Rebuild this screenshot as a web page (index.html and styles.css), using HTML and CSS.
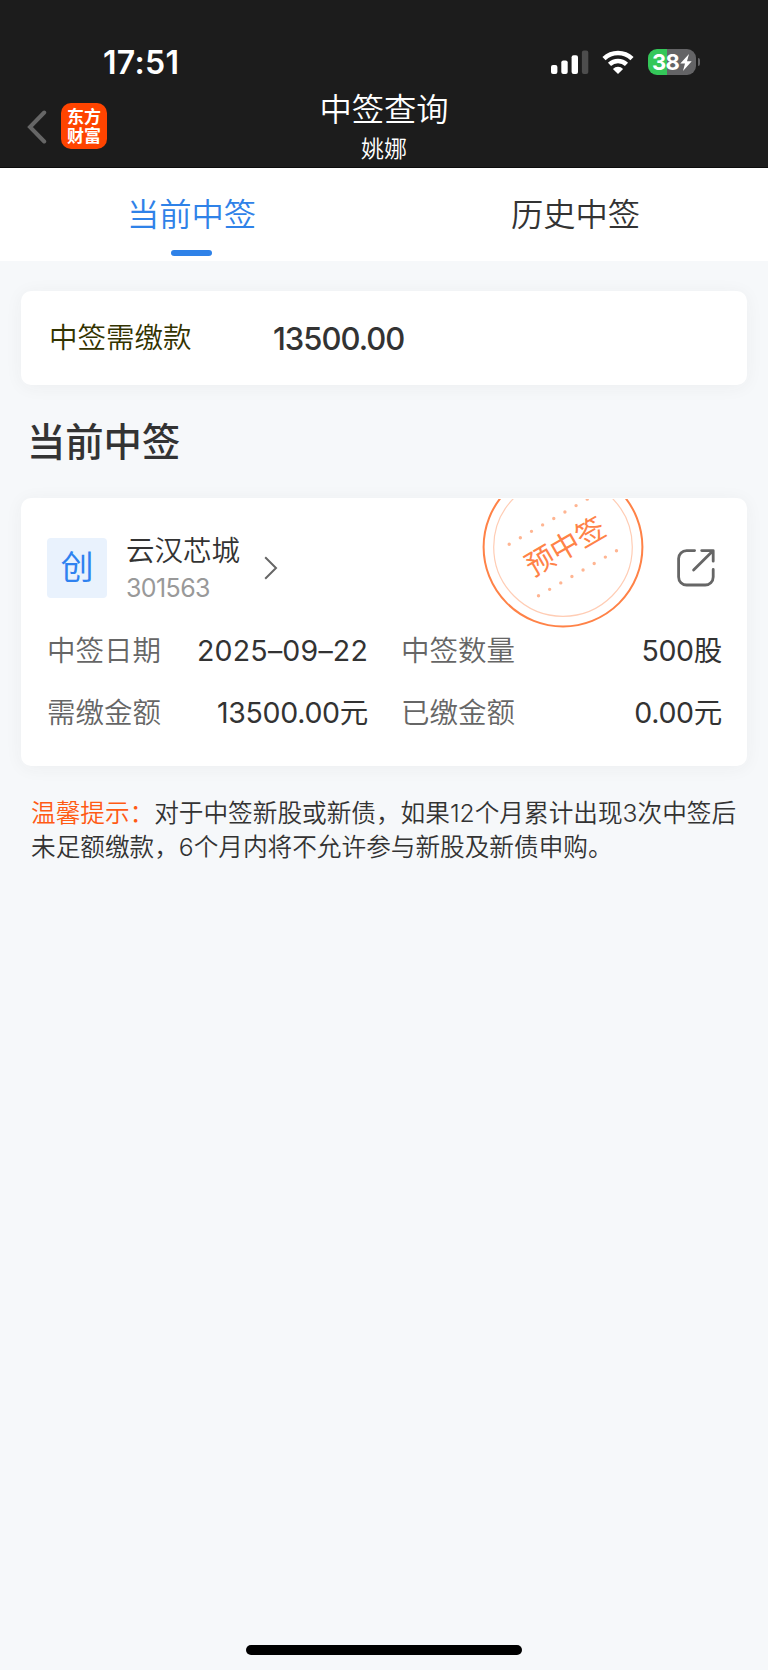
FILE: index.html
```html
<!DOCTYPE html>
<html lang="zh-CN">
<head>
    <meta charset="UTF-8">
    <meta name="viewport" content="width=device-width, initial-scale=1.0">
    <title>中签查询</title>
    <link rel="stylesheet" href="styles.css">
</head>
<body>
    <header class="header">
        <div class="status-bar">
            <span class="time">17:51</span>
            <div class="status-icons">
                <svg class="signal" width="38" height="24" viewBox="0 0 38 24" fill="#fff">
                    <rect x="0" y="15" width="6.4" height="9" rx="2"/>
                    <rect x="10.3" y="10.6" width="6.4" height="13.4" rx="2"/>
                    <rect x="20.6" y="5.2" width="6.4" height="18.8" rx="2"/>
                    <rect x="30.9" y="0.5" width="6.4" height="23.5" rx="2" fill="#4d4d4d"/>
                </svg>
                <svg class="wifi" width="32" height="24" viewBox="0 0 32 24">
                    <path d="M2 8.6A20.3 20.3 0 0 1 30 8.6" fill="none" stroke="#fff" stroke-width="4.6"/>
                    <path d="M7.5 14.4A12.2 12.2 0 0 1 24.5 14.4" fill="none" stroke="#fff" stroke-width="4.4"/>
                    <path d="M16 24L10.9 18.9A7.2 7.2 0 0 1 21.1 18.9Z" fill="#fff"/>
                </svg>
                <div class="battery">
                    <span>38</span>
                    <svg width="12" height="17" viewBox="0 0 12 17" fill="#fff">
                        <path d="M9 0L0.3 9.6H5L3 17L11.7 7.2H7Z"/>
                    </svg>
                </div>
                <i class="battery-cap"></i>
            </div>
        </div>
        <div class="nav">
            <div class="nav-left">
                <svg class="back" width="20" height="36" viewBox="0 0 20 36" fill="none" stroke="#666" stroke-width="4" stroke-linecap="round">
                    <path d="M17.2 3.5L3 18L17.2 32.5"/>
                </svg>
                <div class="app-logo">东方<br>财富</div>
            </div>
            <div class="nav-title">
                <h1>中签查询</h1>
                <p>姚娜</p>
            </div>
        </div>
    </header>

    <nav class="tabs">
        <a class="tab active">当前中签</a>
        <a class="tab">历史中签</a>
    </nav>

    <main class="content">
        <section class="card summary">
            <span class="summary-label">中签需缴款</span>
            <span class="summary-value">13500.00</span>
        </section>

        <h2>当前中签</h2>

        <section class="card detail">
            <svg class="stamp" width="164" height="131" viewBox="0 0 164 131">
                <circle cx="82" cy="48" r="79.4" fill="none" stroke="#ff8247" stroke-width="2"/>
                <circle cx="82" cy="48" r="69.3" fill="none" stroke="#ffcdb5" stroke-width="1.2"/>
                <g stroke="#ffb592" stroke-width="3.4" stroke-linecap="round" stroke-dasharray="0 12.87">
                    <path d="M28.2 45.2L107 -0.3"/>
                    <path d="M57.5 96.8L136.3 51.2"/>
                </g>
                <text class="stamp-text" x="84.5" y="58" text-anchor="middle" transform="rotate(-30 84 48)">预中签</text>
            </svg>

            <div class="stock">
                <div class="badge">创</div>
                <div class="stock-name">
                    <strong>云汉芯城</strong>
                    <span>301563</span>
                </div>
                <svg class="arrow" width="14" height="24" viewBox="0 0 14 24" fill="none" stroke="#666" stroke-width="2">
                    <path d="M1.2 1.2L12 12L1.2 22.8"/>
                </svg>
                <svg class="share" width="40" height="40" viewBox="0 0 40 40" fill="none" stroke="#666" stroke-width="2.8" stroke-linecap="round" stroke-linejoin="round">
                    <path d="M18.6 2.6H10.6A8 8 0 0 0 2.6 10.6V29A8 8 0 0 0 10.6 37H29.2A8 8 0 0 0 37.2 29V21.5"/>
                    <path d="M25.7 2.6H37.2V13.2M37 2.8L17.6 22"/>
                </svg>
            </div>

            <div class="info">
                <div class="item"><label>中签日期</label><span class="date">2025–09–22</span></div>
                <div class="item"><label>中签数量</label><span>500股</span></div>
                <div class="item"><label>需缴金额</label><span>13500.00元</span></div>
                <div class="item"><label>已缴金额</label><span>0.00元</span></div>
            </div>
        </section>

        <p class="tips"><em>温馨提示：</em>对于中签新股或新债，如果12个月累计出现3次中签后<br>未足额缴款，6个月内将不允许参与新股及新债申购。</p>
    </main>

    <div class="home-bar"></div>
</body>
</html>
```
FILE: styles.css
```css
* {
    margin: 0;
    padding: 0;
    box-sizing: border-box;
}

body {
    min-height: 100vh;
    display: flex;
    flex-direction: column;
    background: #f6f8fa;
    color: #333;
    font-family: Inter, "Noto Sans CJK SC", sans-serif;
    font-weight: 350;
}

/* header */
.header {
    height: 168px;
    background: #1c1c1c;
    border-bottom: 1px solid #0c0c0c;
    color: #fff;
}

.status-bar {
    height: 90px;
    padding: 35px 68px 0 103px;
    display: flex;
    justify-content: space-between;
    align-items: center;
}

.time {
    font-size: 32px;
    font-weight: 600;
    letter-spacing: 0.3px;
}

.status-icons {
    display: flex;
    align-items: center;
    margin-top: -1px;
}

.wifi {
    margin-left: 13px;
}

.battery {
    width: 48px;
    height: 26px;
    margin-left: 14px;
    padding-left: 4px;
    border-radius: 9px;
    background: linear-gradient(90deg, #34c759 19px, #646466 19px);
    display: flex;
    align-items: center;
    gap: 1px;
    font-size: 22px;
    font-weight: 700;
    letter-spacing: -0.6px;
}

.battery-cap {
    width: 2px;
    height: 8px;
    margin-left: 2px;
    border-radius: 0 4px 4px 0;
    background: #646466;
}

.nav {
    height: 77px;
    padding: 0 27px;
    display: grid;
    grid-template-columns: 1fr auto 1fr;
}

.nav-left {
    display: flex;
    align-items: flex-start;
    gap: 14px;
    padding-top: 13px;
}

.back {
    margin-top: 6px;
}

.app-logo {
    width: 46px;
    height: 46px;
    padding-top: 5px;
    border-radius: 10px;
    background: #ff4400;
    font-size: 17px;
    font-weight: 700;
    line-height: 19px;
    text-align: center;
}

.nav-title {
    text-align: center;
}

.nav-title h1 {
    font-size: 32.3px;
    font-weight: 350;
    line-height: 40px;
}

.nav-title p {
    font-size: 23px;
    line-height: 39px;
}

/* tabs */
.tabs {
    height: 93px;
    display: flex;
    background: #fff;
}

.tab {
    flex: 1;
    display: flex;
    flex-direction: column;
    align-items: center;
    padding: 23px 1px 0 0;
    font-size: 32.3px;
    line-height: 48px;
}

.tab.active {
    color: #2f82e8;
}

.tab.active::after {
    content: "";
    width: 41px;
    height: 6px;
    margin-top: 11px;
    border-radius: 3px;
    background: #2f82e8;
}

/* content */
.content {
    padding: 30px 21px 0;
}

.card {
    border-radius: 10px;
    background: #fff;
    box-shadow: 0 2px 18px rgba(60, 60, 60, 0.05);
}

.summary {
    height: 94px;
    padding: 0 28px;
    display: flex;
    align-items: center;
}

.summary-label {
    width: 224px;
    padding-bottom: 5px;
    color: #333300;
    font-size: 28.5px;
}

.summary-value {
    font-size: 31px;
    font-weight: 500;
    letter-spacing: -1px;
}

h2 {
    margin: 28px 0 27px 6px;
    font-size: 38.3px;
    font-weight: 500;
    line-height: 58px;
}

.detail {
    position: relative;
    height: 268px;
    padding: 33px 25px 0 26px;
}

.stamp {
    position: absolute;
    top: 1px;
    left: 460px;
}

.stamp-text {
    fill: #ff8247;
    font-size: 29px;
    font-weight: 400;
}

.stock {
    height: 74px;
    display: flex;
    align-items: center;
}

.badge {
    width: 60px;
    height: 60px;
    border-radius: 4px;
    background: #e9f2fd;
    color: #2f82f0;
    font-size: 33px;
    font-weight: 400;
    line-height: 58px;
    text-align: center;
}

.stock-name {
    width: 138px;
    margin-left: 19px;
    padding-top: 2px;
    display: flex;
    flex-direction: column;
}

.stock-name strong {
    font-size: 28.5px;
    font-weight: 350;
    line-height: 38px;
}

.stock-name span {
    color: #999;
    font-size: 25px;
    font-weight: 400;
    line-height: 36px;
    letter-spacing: -0.6px;
}

.share {
    margin-left: auto;
    margin-right: 6px;
}

.info {
    margin-top: 15px;
    display: grid;
    grid-template-columns: 321px 321px;
    column-gap: 33px;
}

.item {
    display: flex;
    justify-content: space-between;
    height: 62px;
    font-size: 28.5px;
    line-height: 62px;
}

.item label {
    color: #666;
}

.item span {
    font-weight: 400;
    letter-spacing: -0.3px;
}

.item .date {
    letter-spacing: 0.2px;
}

.tips {
    margin: 30px 0 0 10px;
    font-size: 24.65px;
    line-height: 34px;
    white-space: nowrap;
}

.tips em {
    color: #ff5a14;
    font-style: normal;
}

.home-bar {
    width: 276px;
    height: 10px;
    margin: auto auto 15px;
    border-radius: 5px;
    background: #000;
}
```
